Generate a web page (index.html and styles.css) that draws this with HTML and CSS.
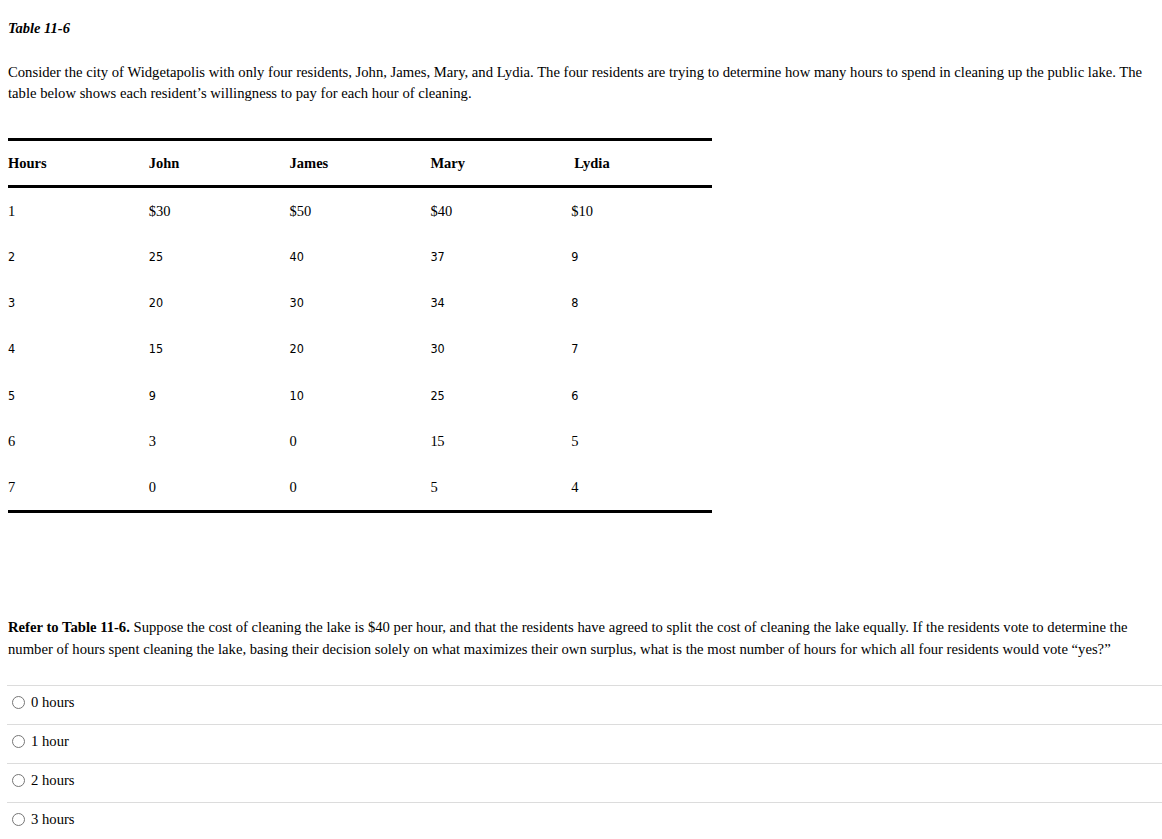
FILE: index.html
```html
<!DOCTYPE html>
<html>
<head>
<meta charset="utf-8">
<link rel="stylesheet" href="styles.css">
</head>
<body>
<div class="page">
  <p class="caption">Table 11-6</p>
  <p class="intro">Consider the city of Widgetapolis with only four residents, John, James, Mary, and Lydia. The four residents are trying to determine how many hours to spend in cleaning up the public lake. The table below shows each resident’s willingness to pay for each hour of cleaning.</p>
  <table class="data">
    <thead>
      <tr><th>Hours</th><th>John</th><th>James</th><th>Mary</th><th class="lydia">Lydia</th></tr>
    </thead>
    <tbody>
      <tr><td>1</td><td>$30</td><td>$50</td><td>$40</td><td>$10</td></tr>
      <tr class="sans"><td>2</td><td>25</td><td>40</td><td>37</td><td>9</td></tr>
      <tr class="sans"><td>3</td><td>20</td><td>30</td><td>34</td><td>8</td></tr>
      <tr class="sans"><td>4</td><td>15</td><td>20</td><td>30</td><td>7</td></tr>
      <tr class="sans"><td>5</td><td>9</td><td>10</td><td>25</td><td>6</td></tr>
      <tr class="narrow"><td>6</td><td>3</td><td>0</td><td>15</td><td>5</td></tr>
      <tr class="narrow"><td>7</td><td>0</td><td>0</td><td>5</td><td>4</td></tr>
    </tbody>
  </table>
  <p class="question"><b>Refer to Table 11-6.</b> Suppose the cost of cleaning the lake is $40 per hour, and that the residents have agreed to split the cost of cleaning the lake equally. If the residents vote to determine the number of hours spent cleaning the lake, basing their decision solely on what maximizes their own surplus, what is the most number of hours for which all four residents would vote “yes?”</p>
  <ul class="options">
    <li><span class="radio"></span>0 hours</li>
    <li><span class="radio"></span>1 hour</li>
    <li><span class="radio"></span>2 hours</li>
    <li><span class="radio"></span>3 hours</li>
  </ul>
</div>
</body>
</html>
```
FILE: styles.css
```css
html, body {
  margin: 0;
  padding: 0;
  background: #fff;
}
body {
  font-family: "Liberation Serif", "Times New Roman", serif;
  font-size: 14.67px;
  color: #000;
}
.page {
  padding: 8px 0 0 7px;
}
.caption {
  margin: 11px 0 0 1px;
  font-style: italic;
  font-weight: bold;
  font-size: 14.5px;
  line-height: 18px;
}
.intro {
  margin: 25px 0 0 1px;
  line-height: 21px;
  padding-right: 14px;
}
.data {
  margin: 34px 0 0 1px;
  border-collapse: collapse;
  width: 704px;
  table-layout: fixed;
}
.data th, .data td {
  padding: 0;
  text-align: left;
  vertical-align: middle;
}
.data thead tr {
  border-top: 3px solid #000;
  border-bottom: 3px solid #000;
}
.data th {
  height: 44px;
  font-size: 14.5px;
  font-weight: bold;
}
.data th.lydia {
  padding-left: 3px;
}
.data tbody tr {
  height: 46.4px;
}
.data tbody tr:first-child td {
  padding-top: 2px;
}
.data tbody tr:last-child {
  border-bottom: 3px solid #000;
}
.data td {
  font-size: 14.5px;
}
.data tr.sans td {
  font-family: "DejaVu Sans Condensed", "DejaVu Sans", Tahoma, sans-serif;
  font-size: 12.5px;
}
.data tr.narrow td {
  font-size: 14.5px;
  letter-spacing: -0.3px;
}
.question {
  margin: 103px 0 0 1px;
  line-height: 22px;
}
.options {
  list-style: none;
  margin: 25px 0 0 0;
  padding: 0;
}
.options li {
  border-top: 1px solid #dcdcdc;
  height: 33px;
  padding-bottom: 5px;
  display: flex;
  align-items: center;
  padding-left: 5px;
  gap: 6px;
}
.radio {
  display: inline-block;
  width: 11px;
  height: 11px;
  border: 1px solid #767676;
  border-radius: 50%;
  box-sizing: content-box;
}
```
